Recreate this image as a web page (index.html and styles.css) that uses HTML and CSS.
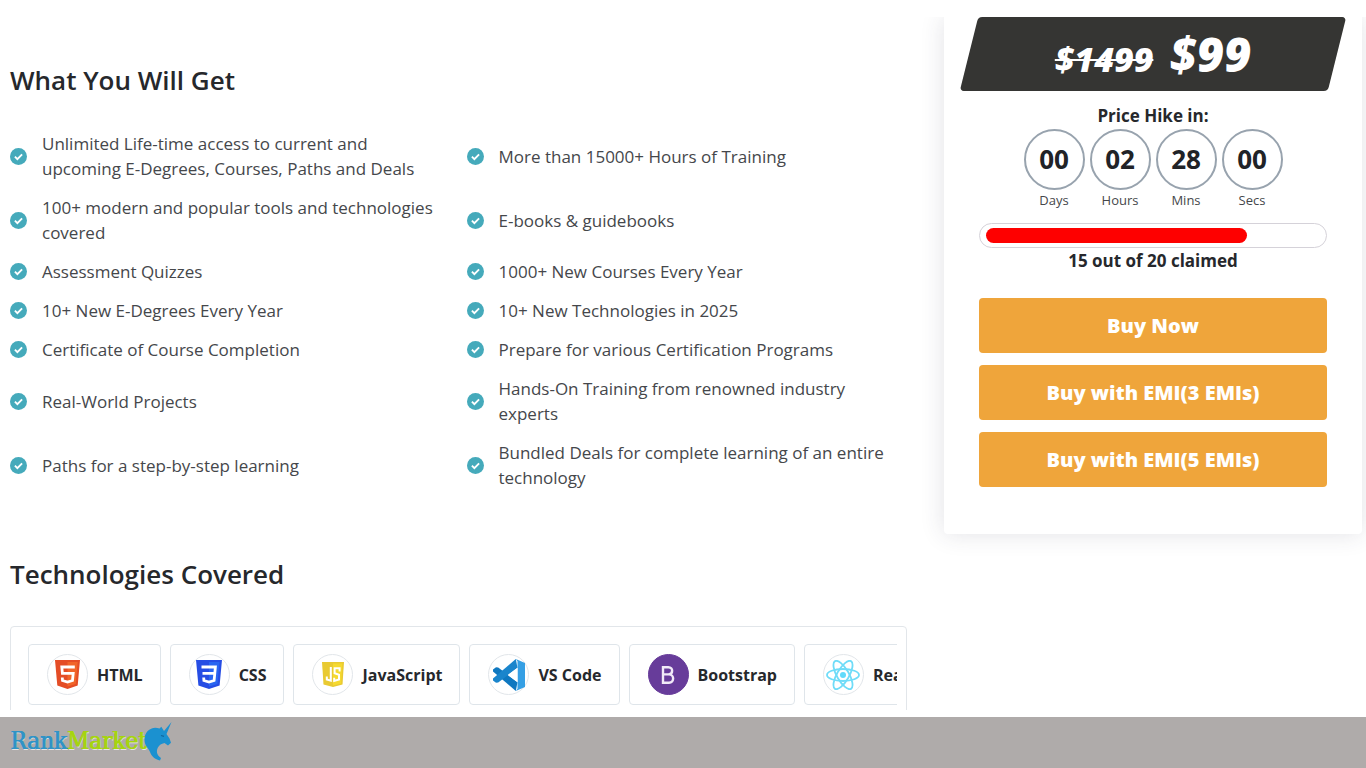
FILE: index.html
```html
<!DOCTYPE html>
<html lang="en">
<head>
    <meta charset="UTF-8">
    <meta name="viewport" content="width=device-width, initial-scale=1.0">
    <title>What You Will Get</title>
    <link rel="stylesheet" href="styles.css">
</head>
<body>

    <!-- shared check mark -->
    <svg class="sprite" aria-hidden="true">
        <symbol id="check" viewBox="0 0 18 18">
            <circle cx="9" cy="9" r="9" fill="#45aabb"/>
            <path d="M5.2 9.2l2.6 2.6 5-5" fill="none" stroke="#fff" stroke-width="2"/>
        </symbol>
    </svg>

    <main class="page">
        <div class="content">
            <section>
                <h2>What You Will Get</h2>
                <ul class="benefits">
                    <li><svg><use href="#check"/></svg><span>Unlimited Life-time access to current and upcoming E-Degrees, Courses, Paths and Deals</span></li>
                    <li><svg><use href="#check"/></svg><span>More than 15000+ Hours of Training</span></li>
                    <li><svg><use href="#check"/></svg><span>100+ modern and popular tools and technologies covered</span></li>
                    <li><svg><use href="#check"/></svg><span>E-books &amp; guidebooks</span></li>
                    <li><svg><use href="#check"/></svg><span>Assessment Quizzes</span></li>
                    <li><svg><use href="#check"/></svg><span>1000+ New Courses Every Year</span></li>
                    <li><svg><use href="#check"/></svg><span>10+ New E-Degrees Every Year</span></li>
                    <li><svg><use href="#check"/></svg><span>10+ New Technologies in 2025</span></li>
                    <li><svg><use href="#check"/></svg><span>Certificate of Course Completion</span></li>
                    <li><svg><use href="#check"/></svg><span>Prepare for various Certification Programs</span></li>
                    <li><svg><use href="#check"/></svg><span>Real-World Projects</span></li>
                    <li><svg><use href="#check"/></svg><span>Hands-On Training from renowned industry experts</span></li>
                    <li><svg><use href="#check"/></svg><span>Paths for a step-by-step learning</span></li>
                    <li><svg><use href="#check"/></svg><span>Bundled Deals for complete learning of an entire technology</span></li>
                </ul>
            </section>

            <section>
                <h2>Technologies Covered</h2>
                <div class="tech-box">
                    <ul class="tech-list">
                        <li>
                            <span class="tech-icon">
                                <svg width="25" height="29" viewBox="0 0 25 29">
                                    <path d="M0 0h25l-2.3 25.5L12.5 29 2.3 25.5z" fill="#e44d26"/>
                                    <path d="M12.5 2v24.6l8.2-2.6L22.7 2z" fill="#f16529"/>
                                    <path d="M19.8 7H6.8l.6 6.3h10.8l-.7 7.2-5 1.6-5-1.6-.2-3" fill="none" stroke="#fff" stroke-width="2.8"/>
                                </svg>
                            </span>
                            HTML
                        </li>
                        <li>
                            <span class="tech-icon">
                                <svg width="26" height="29" viewBox="0 0 26 29">
                                    <path d="M0 0h26l-2.4 25.5L13 29 2.4 25.5z" fill="#264de4"/>
                                    <path d="M13 2v24.6l8.4-2.6L23.6 2z" fill="#2965f1"/>
                                    <path d="M5.5 7h13.9l-.6 6.3H6.5M18.8 13.3l-.7 7.2-5.1 1.6-5.1-1.6-.2-3" fill="none" stroke="#fff" stroke-width="2.8"/>
                                </svg>
                            </span>
                            CSS
                        </li>
                        <li>
                            <span class="tech-icon">
                                <svg width="22" height="25" viewBox="0 0 22 25">
                                    <path d="M0 0h22l-1.5 22.5L11 25l-9.5-2.5z" fill="#e9ca32"/>
                                    <path d="M11 1.5v22l8-2 1.3-20z" fill="#f5d92f"/>
                                    <path d="M8.8 5v13.6l-4-1.2v-3M17.6 9.5V6.3h-5v5l4.4 1.5v4.6l-4.8 1.5v-3.2" fill="none" stroke="#fff" stroke-width="2"/>
                                </svg>
                            </span>
                            JavaScript
                        </li>
                        <li>
                            <span class="tech-icon">
                                <svg width="32" height="32" viewBox="0 0 32 32">
                                    <path d="M3 8.200L0 10.600v2L22.800 32l1.700-8.800L5.200 8.500z" fill="#0f78c0"/>
                                    <path d="M3 23.800L0 21.400v-2L22.800 0l1.700 8.800L5.200 23.500z" fill="#1a85cc"/>
                                    <path d="M22.800 0L32 4v24l-9.200 4 1.700-2.300V2.300z" fill="#359fe4"/>
                                    <path d="M24.500 8.800L14.800 16l9.700 7.200z" fill="#fff"/>
                                </svg>
                            </span>
                            VS Code
                        </li>
                        <li>
                            <span class="tech-icon tech-icon-filled">
                                <svg width="14" height="18" viewBox="0 0 14 18" fill="none" stroke="#f1eaf8" stroke-width="2.4">
                                    <path d="M2 1.200h5.400c5 0 5 7.200 0 7.200H2zM2 8.400h6c5.500 0 5.500 8.400 0 8.400H2z"/>
                                </svg>
                            </span>
                            Bootstrap
                        </li>
                        <li>
                            <span class="tech-icon">
                                <svg width="34" height="30" viewBox="-17 -15 34 30" fill="none" stroke="#6fdcf8" stroke-width="1.800">
                                    <circle r="3" fill="#61dafb" stroke="none"/>
                                    <ellipse rx="16" ry="6"/>
                                    <ellipse rx="16" ry="6" transform="rotate(60)"/>
                                    <ellipse rx="16" ry="6" transform="rotate(120)"/>
                                </svg>
                            </span>
                            React
                        </li>
                    </ul>
                </div>
            </section>
        </div>

        <aside class="price-card">
            <div class="price">
                <del>$1499</del>
                <strong>$99</strong>
            </div>
            <p class="caption">Price Hike in:</p>
            <div class="countdown">
                <div class="unit"><span class="digits">00</span>Days</div>
                <div class="unit"><span class="digits">02</span>Hours</div>
                <div class="unit"><span class="digits">28</span>Mins</div>
                <div class="unit"><span class="digits">00</span>Secs</div>
            </div>
            <div class="progress" role="progressbar" aria-label="Claimed" aria-valuemin="0" aria-valuemax="20" aria-valuenow="15">
                <div class="progress-bar"></div>
            </div>
            <p class="caption">15 out of 20 claimed</p>
            <div class="actions">
                <button type="button">Buy Now</button>
                <button type="button">Buy with EMI(3 EMIs)</button>
                <button type="button">Buy with EMI(5 EMIs)</button>
            </div>
        </aside>
    </main>

    <footer class="footer">
        <a class="logo" href="#">
            <span class="logo-rank">Rank</span><span class="logo-market">Market</span>
            <svg width="28" height="39" viewBox="0 0 28 39" fill="#1b91d0">
                <path d="M27.500 0L20 9 17.300 4.800 15.500 6.500C8 3.500 .5 9 .5 17.500 .5 24 4.500 26 6 30 7.500 34 11 37.500 16 38.500L17 36C12.500 33 11.500 28 15 24 16.500 22 18.500 21.500 20.500 21L24 23.500 27 20.800 25.500 16.500 22.500 12z"/>
                <path d="M17 13.500l3 .8" stroke="#12669c" stroke-width="1.200"/>
            </svg>
        </a>
    </footer>

</body>
</html>
```
FILE: styles.css
```css
* {
    box-sizing: border-box;
}

body {
    display: flex;
    flex-direction: column;
    height: 100vh;
    margin: 0;
    padding-top: 17px;
    overflow: hidden;
    background-color: #fff;
    color: #26282c;
    font-family: "Open Sans", "Noto Sans", sans-serif;
}

h2, p, ul {
    margin: 0;
    padding: 0;
}

ul {
    list-style: none;
}

.sprite {
    display: none;
}

.page {
    display: grid;
    grid-template-columns: minmax(0, 897fr) minmax(0, 418fr);
    column-gap: 37px;
    align-items: start;
    flex: 1;
    min-height: 0;
    margin-bottom: 7px;
    padding: 0 4px 0 10px;
    overflow: hidden;
}

.content {
    padding-top: 46px;
}

h2 {
    font-size: 26px;
    font-weight: 600;
    line-height: 35px;
}

/* What you will get */
.benefits {
    display: grid;
    grid-template-columns: 1fr 1fr;
    column-gap: 16px;
    row-gap: 14px;
    margin: 33px 0 67px;
    color: #45474b;
    font-size: 17px;
    line-height: 25px;
}

    .benefits li {
        display: flex;
        align-items: center;
        gap: 15px;
        padding-right: 16px;
    }

    .benefits svg {
        flex: none;
        width: 17px;
        height: 17px;
    }

/* Technologies */
.tech-box {
    margin-top: 34px;
    padding: 17px 9px 30px 17px;
    border: 1px solid #e2e6ea;
    border-radius: 4px;
}

.tech-list {
    display: flex;
    gap: 9px;
    overflow: hidden;
}

    .tech-list li {
        display: flex;
        flex: none;
        align-items: center;
        gap: 9px;
        padding: 9px 17px 9px 18px;
        border: 1px solid #dfe5ea;
        border-radius: 4px;
        font-size: 16px;
        font-weight: 700;
    }

.tech-icon {
    display: flex;
    align-items: center;
    justify-content: center;
    width: 41px;
    height: 41px;
    border: 1px solid #e2e6ea;
    border-radius: 50%;
}

.tech-icon-filled {
    border-color: #673c9a;
    background-color: #673c9a;
}

/* Price card */
.price-card {
    padding: 0 35px 47px 35px;
    border-radius: 0 0 4px 4px;
    background-color: #fff;
    box-shadow: 0 0 24px rgba(50, 50, 80, 0.14);
    text-align: center;
}

.price {
    position: relative;
    z-index: 0;
    display: flex;
    align-items: baseline;
    justify-content: center;
    gap: 16px;
    height: 74px;
    margin: 0 -10px 12px;
    color: #fff;
    font-style: italic;
    font-weight: 800;
    line-height: 74px;
}

    .price::before {
        content: "";
        position: absolute;
        inset: 0;
        z-index: -1;
        border-radius: 4px;
        background-color: #353533;
        transform: skewX(-14deg);
    }

    .price del {
        font-size: 34px;
        text-decoration-thickness: 2px;
    }

    .price strong {
        font-size: 47px;
        font-weight: 800;
    }

.caption {
    font-size: 17px;
    font-weight: 700;
    line-height: 26px;
}

.countdown {
    display: flex;
    justify-content: center;
    gap: 5px;
}

.unit {
    width: 61px;
    color: #45474b;
    font-size: 13px;
    line-height: 20px;
}

.digits {
    display: block;
    height: 61px;
    border: 2px solid #98a3ae;
    border-radius: 50%;
    color: #212327;
    font-size: 26px;
    font-weight: 700;
    line-height: 57px;
}

.progress {
    height: 25px;
    margin-top: 13px;
    padding: 4px 6px;
    border: 1px solid #d5d2d9;
    border-radius: 13px;
}

.progress-bar {
    width: 78%;
    height: 15px;
    border-radius: 8px;
    background-color: #fe0000;
}

.actions {
    display: flex;
    flex-direction: column;
    gap: 12px;
    margin-top: 24px;
}

    .actions button {
        height: 55px;
        padding: 0;
        border: none;
        border-radius: 4px;
        background-color: #efa53b;
        color: #fff;
        font-family: inherit;
        font-size: 20px;
        font-weight: 800;
        cursor: pointer;
    }

/* Footer */
.footer {
    flex: none;
    padding: 5px 10px 7px;
    background-color: #afabaa;
}

.logo {
    display: flex;
    align-items: center;
    font-family: "DejaVu Serif Condensed", "DejaVu Serif", serif;
    font-size: 24px;
    line-height: 39px;
    text-decoration: none;
    text-shadow: 1px 0 0 currentColor, 1px 1px 0 rgba(255, 255, 255, 0.7);
}

    .logo svg {
        margin-left: -3px;
    }

.logo-rank {
    color: #2f93c6;
}

.logo-market {
    color: #a6d40f;
}
```
